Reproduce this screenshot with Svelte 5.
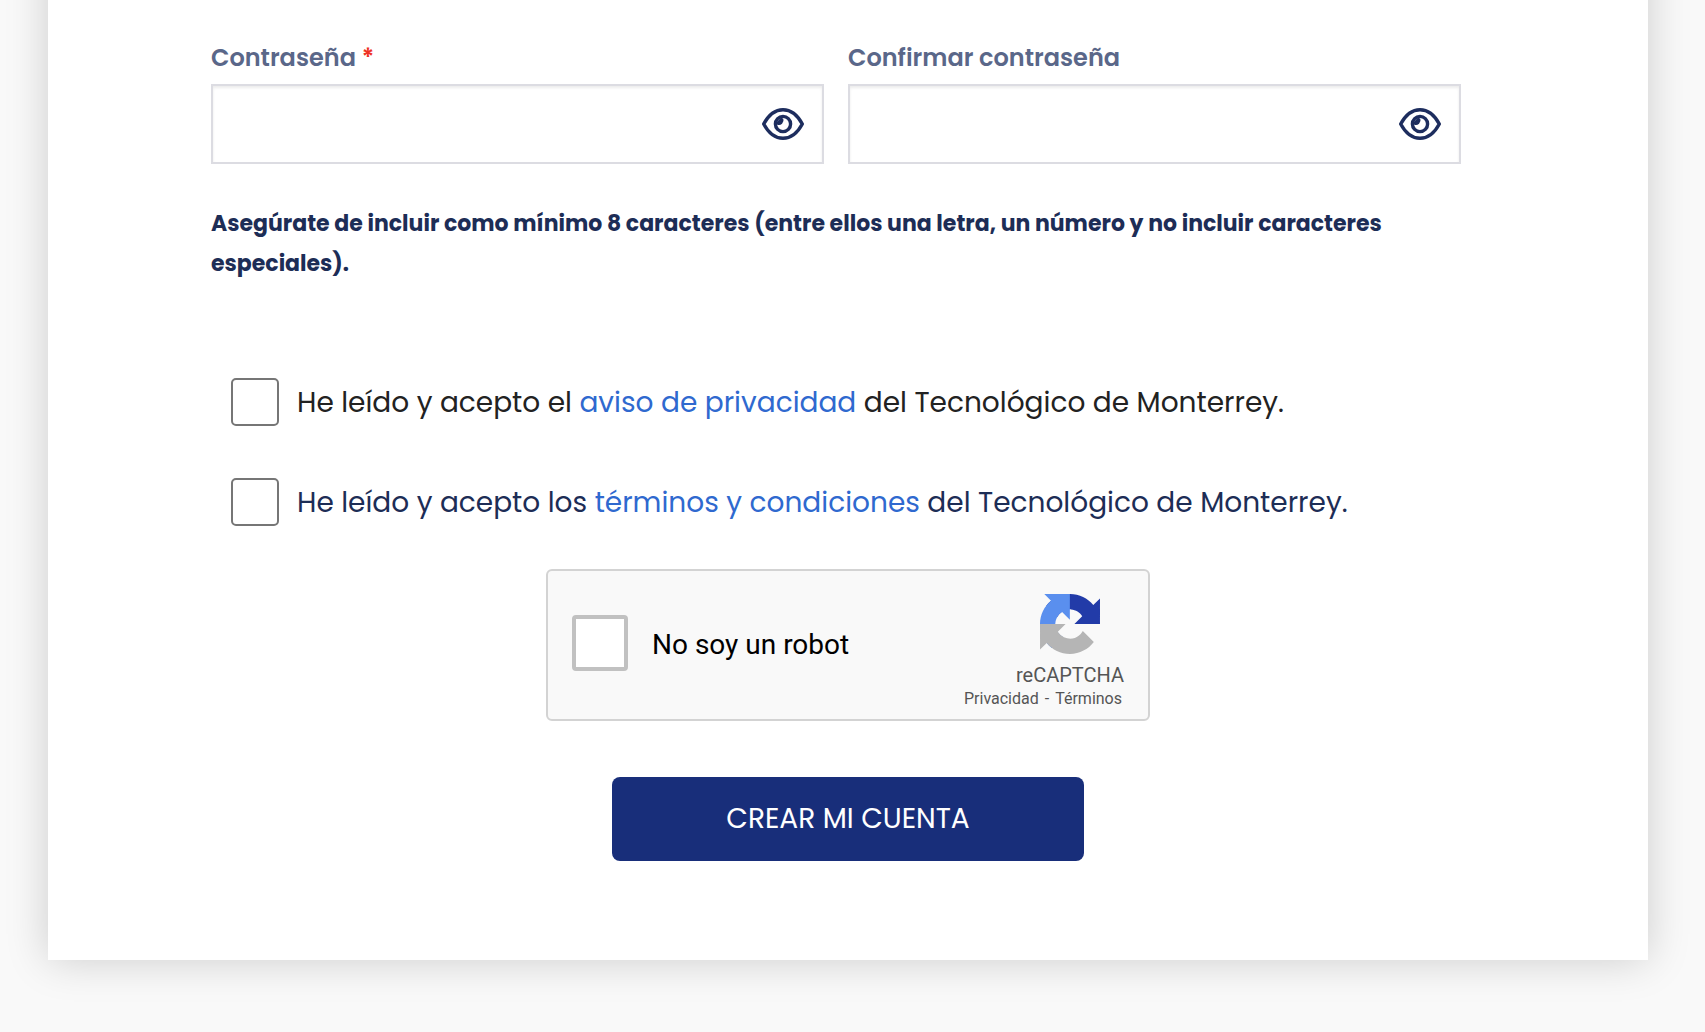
<script lang="ts">
  const passwordFields = [
    { id: "password", label: "Contraseña", required: true },
    { id: "password-confirm", label: "Confirmar contraseña", required: false },
  ];

  let visible: Record<string, boolean> = $state({});
  let values: Record<string, string> = $state({});
  let privacy = $state(false);
  let terms = $state(false);
  let human = $state(false);
</script>

<main class="card">
  <form onsubmit={(event) => event.preventDefault()}>
    <div class="fields">
      {#each passwordFields as field (field.id)}
        <div class="field">
          <label for={field.id}>
            {field.label}
            {#if field.required}<span class="required">*</span>{/if}
          </label>
          <div class="control">
            <input
              id={field.id}
              type={visible[field.id] ? "text" : "password"}
              required={field.required}
              value={values[field.id] ?? ""}
              oninput={(event) => (values[field.id] = event.currentTarget.value)}
            />
            <button
              type="button"
              class="reveal"
              aria-label="Mostrar contraseña"
              aria-pressed={!!visible[field.id]}
              onclick={() => (visible[field.id] = !visible[field.id])}
            >
              <svg viewBox="0 0 42 32" width="42" height="32" fill="none" stroke="currentColor" aria-hidden="true">
                <path
                  d="M1.700 16C6.500 7 13 1.700 21 1.700s14.500 5.300 19.300 14.300c-4.800 9-11.300 14.300-19.300 14.300S6.500 25 1.700 16z"
                  stroke-width="3.400"
                  stroke-linejoin="round"
                />
                <circle cx="21" cy="16" r="7.600" stroke-width="3.400" />
                <path d="M14 15 19 9.500 21.300 10.800a4.600 4.600 0 0 1-6.300 5.700z" fill="currentColor" stroke="none" />
              </svg>
            </button>
          </div>
        </div>
      {/each}
    </div>

    <p class="hint">
      Asegúrate de incluir como mínimo 8 caracteres (entre ellos una letra, un número y no incluir caracteres
      especiales).
    </p>

    <div class="consent privacy">
      <input id="privacy" type="checkbox" bind:checked={privacy} />
      <label for="privacy">
        He leído y acepto el <a href="#privacidad">aviso de privacidad</a> del Tecnológico de Monterrey.
      </label>
    </div>
    <div class="consent">
      <input id="terms" type="checkbox" bind:checked={terms} />
      <label for="terms">
        He leído y acepto los <a href="#terminos">términos y condiciones</a> del Tecnológico de Monterrey.
      </label>
    </div>

    <div class="captcha">
      <input id="human" type="checkbox" bind:checked={human} />
      <label for="human">No soy un robot</label>
      <div class="brand">
        <svg viewBox="0 0 64 64" width="60" height="60" aria-hidden="true">
          <path
            fill="#223ba8"
            d="M64 31.955l-.033-1.370V4.687l-7.160 7.160C50.948 4.674 42.033.093 32.050.093c-10.400 0-19.622 4.960-25.458 12.640l11.736 11.860a15.550 15.550 0 0 1 4.754-5.334c2.050-1.600 4.952-2.906 8.968-2.906.485 0 .860.057 1.135.163 4.976.393 9.288 3.140 11.828 7.124l-8.307 8.307L64 31.953"
          />
          <path
            fill="#5a8fee"
            d="M31.862.094l-1.370.033H4.594l7.160 7.160C4.580 13.147 0 22.060 0 32.046c0 10.400 4.960 19.622 12.640 25.458L24.500 45.768a15.550 15.550 0 0 1-5.334-4.754c-1.600-2.050-2.906-4.952-2.906-8.968 0-.485.057-.860.163-1.135.393-4.976 3.140-9.288 7.124-11.828l8.307 8.307L31.860.095"
          />
          <path
            fill="#b5b5b5"
            d="M.001 32.045l.033 1.370v25.898l7.160-7.160c5.860 7.173 14.774 11.754 24.760 11.754 10.400 0 19.622-4.960 25.458-12.640l-11.736-11.860a15.550 15.550 0 0 1-4.754 5.334c-2.050 1.600-4.952 2.906-8.968 2.906-.485 0-.860-.057-1.135-.163-4.976-.393-9.288-3.140-11.828-7.124l8.307-8.307L0 32.047"
          />
        </svg>
        <span class="name">reCAPTCHA</span>
        <div class="legal">
          <a href="#captcha-privacidad">Privacidad</a>
          <span>-</span>
          <a href="#captcha-terminos">Términos</a>
        </div>
      </div>
    </div>

    <button type="submit" class="submit">CREAR MI CUENTA</button>
  </form>
</main>

<style>
  :global(body) {
    background: #f9f9f9;
    overflow-x: hidden;
  }

  :global(#app) {
    display: flow-root;
    overflow: hidden;
  }

  /* The card runs off the top edge so that its side shadow stays even. */
  .card {
    box-sizing: border-box;
    margin: -60px 57px 72px 48px;
    padding: 98px 163px 99px;
    background: #fff;
    box-shadow: 0 0 40px rgb(0 0 0 / 18%);
    color: #1d2d56;
    font-family: Poppins, Inter, sans-serif;
  }

  form {
    display: flex;
    flex-direction: column;
  }

  a {
    color: #2f69cf;
    text-decoration: none;
  }

  input {
    box-sizing: border-box;
    margin: 0;
  }

  button {
    font-family: inherit;
    cursor: pointer;
  }

  .fields {
    display: grid;
    grid-template-columns: 1fr 1fr;
  }

  .field {
    padding-right: 24px;
  }

  .field label {
    display: block;
    margin-bottom: 6px;
    color: #5a6789;
    font-size: 24px;
    font-weight: 600;
    line-height: 40px;
  }

  .required {
    color: #ee3124;
  }

  .control {
    display: flex;
    align-items: center;
    box-sizing: border-box;
    height: 80px;
    padding-right: 18px;
    border: 2px solid #dcdce2;
    box-shadow: inset 0 2px 3px rgb(0 0 0 / 8%);
  }

  .control input {
    flex: 1;
    min-width: 0;
    height: 100%;
    padding: 0 20px;
    border: 0;
    outline: 0;
    background: transparent;
    color: inherit;
    font: inherit;
    font-size: 24px;
  }

  .reveal {
    display: flex;
    padding: 0;
    border: 0;
    background: none;
    color: #1d2d5e;
  }

  .hint {
    margin: 40px 24px 94px 0;
    font-size: 22px;
    font-weight: 700;
    line-height: 40px;
  }

  .consent {
    display: flex;
    align-items: center;
    gap: 18px;
    margin: 0 0 52px 20px;
    font-size: 28px;
    line-height: 46px;
  }

  .consent + .consent {
    margin-bottom: 43px;
  }

  .consent label {
    padding-top: 2px;
  }

  .consent.privacy label {
    color: #222;
  }

  .consent input,
  .captcha input {
    flex: none;
    appearance: none;
    width: 48px;
    height: 48px;
    border: 2px solid #767676;
    border-radius: 5px;
    background: #fff;
  }

  .consent input:checked,
  .captcha input:checked {
    background: #182e7a;
  }

  .captcha {
    display: flex;
    align-items: center;
    align-self: center;
    box-sizing: border-box;
    width: 604px;
    height: 152px;
    padding: 0 24px;
    border: 2px solid #d3d3d3;
    border-radius: 6px;
    background: #f9f9f9;
    color: #000;
    font-family: Roboto, sans-serif;
  }

  .captcha input {
    width: 56px;
    height: 56px;
    margin-bottom: 4px;
    border: 4px solid #c1c1c1;
    border-radius: 4px;
  }

  .captcha label {
    flex: 1;
    padding-left: 24px;
    font-size: 28px;
    line-height: 32px;
  }

  .brand {
    display: flex;
    flex-direction: column;
    align-items: flex-end;
    padding-top: 14px;
    color: #555;
  }

  .brand svg {
    margin-right: 24px;
  }

  .name {
    padding-top: 9px;
    font-size: 20px;
    line-height: 24px;
  }

  .legal {
    display: flex;
    gap: 6px;
    padding-right: 2px;
    font-size: 16px;
    line-height: 24px;
  }

  .legal a {
    color: inherit;
  }

  .submit {
    align-self: center;
    width: 472px;
    height: 84px;
    margin-top: 56px;
    border: 0;
    border-radius: 8px;
    background: #182e7a;
    color: #fff;
    font-size: 28px;
  }
</style>
